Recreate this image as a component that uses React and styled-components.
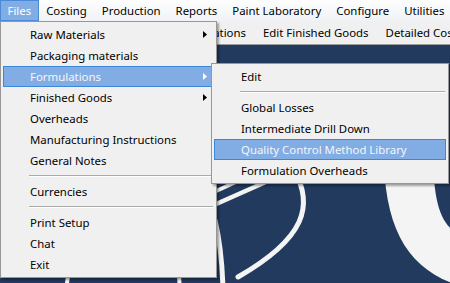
import React from "react";
import styled, { createGlobalStyle } from "styled-components";

const GlobalStyle = createGlobalStyle`
  html, body {
    margin: 0;
    padding: 0;
  }
  body {
    width: 450px;
    height: 283px;
    overflow: hidden;
    font-family: "Noto Sans", "Segoe UI", sans-serif;
    font-size: 11.4px;
  }
`;

const Window = styled.div`
  position: relative;
  width: 450px;
  height: 283px;
  display: flex;
  flex-direction: column;
  background: #213a5e;
  overflow: hidden;
`;

const MenuBar = styled.div`
  display: flex;
  height: 21px;
  background: linear-gradient(#fefefe, #f0f2f5);
  white-space: nowrap;
`;

const MenuBarItem = styled.div`
  display: flex;
  align-items: center;
  box-sizing: border-box;
  padding: 0 6.5px 1px;
  border: 1px solid ${(p) => (p.$open ? "#4a8ad6" : "transparent")};
  background: ${(p) => (p.$open ? "#82ade4" : "transparent")};
  color: ${(p) => (p.$open ? "#ffffff" : "#000000")};
`;

const Toolbar = styled.div`
  display: flex;
  align-items: center;
  gap: 17px;
  height: 23px;
  padding-left: 175px;
  background: #f0f0f0;
  border-bottom: 1px solid #9c9c9c;
  white-space: nowrap;
  overflow: hidden;
`;

const ToolButton = styled.div`
  color: #000;
`;

const Desktop = styled.div`
  flex: 1;
  position: relative;
  background: #213a5e;
`;

const Logo = styled.svg`
  display: block;
  width: 100%;
  height: 100%;
`;

const Dropdown = styled.div`
  position: absolute;
  left: ${(p) => p.$left}px;
  top: ${(p) => p.$top}px;
  width: ${(p) => p.$width}px;
  box-sizing: border-box;
  padding: 2px;
  background: #f0f0f0;
  border: 1px solid #979797;
  box-shadow: 2px 2px 2px rgba(0, 0, 0, 0.35);
  z-index: ${(p) => p.$layer || 1};
`;

const Item = styled.div`
  position: relative;
  display: flex;
  align-items: center;
  box-sizing: border-box;
  height: 21px;
  padding: 0 0 1px 26px;
  border: 1px solid ${(p) => (p.$active ? "#3d87d8" : "transparent")};
  background: ${(p) => (p.$active ? "#82ade4" : "transparent")};
  color: ${(p) => (p.$active ? "#f6f6f6" : "#000000")};
  white-space: nowrap;
`;

const Arrow = styled.svg`
  position: absolute;
  right: 6px;
  top: 6px;
  width: 4px;
  height: 7px;
`;

const Separator = styled.div`
  height: 10px;
  display: flex;
  align-items: flex-start;
  padding: 4px 1px 0 26px;
  box-sizing: border-box;

  &::after {
    content: "";
    flex: 1;
    border-top: 1px solid #ababab;
    border-bottom: 1px solid #ffffff;
  }
`;

const SubmenuSlot = styled.div`
  position: absolute;
  left: 0;
  top: 0;
`;

const fileItems = [
  { label: "Raw Materials", more: true },
  { label: "Packaging materials" },
  { label: "Formulations", more: true, open: true },
  { label: "Finished Goods", more: true },
  { label: "Overheads" },
  { label: "Manufacturing Instructions" },
  { label: "General Notes" },
  "sep",
  { label: "Currencies" },
  "sep",
  { label: "Print Setup" },
  { label: "Chat" },
  { label: "Exit" },
];

const formulationItems = [
  { label: "Edit" },
  "sep",
  { label: "Global Losses" },
  { label: "Intermediate Drill Down" },
  { label: "Quality Control Method Library", active: true },
  { label: "Formulation Overheads" },
];

const SubArrow = ({ light }) => (
  <Arrow viewBox="0 0 4 7">
    <polygon points="0,0 4,3.5 0,7" fill={light ? "#ffffff" : "#000000"} />
  </Arrow>
);

const MenuList = ({ items }) =>
  items.map((it, i) =>
    it === "sep" ? (
      <Separator key={i} />
    ) : (
      <Item key={i} $active={it.active || it.open}>
        {it.label}
        {it.more && <SubArrow light={it.open} />}
      </Item>
    )
  );

const App = () => {
  return (
    <>
      <GlobalStyle />
      <Window>
        <MenuBar>
          <MenuBarItem $open>Files</MenuBarItem>
          <MenuBarItem>Costing</MenuBarItem>
          <MenuBarItem>Production</MenuBarItem>
          <MenuBarItem>Reports</MenuBarItem>
          <MenuBarItem>Paint Laboratory</MenuBarItem>
          <MenuBarItem>Configure</MenuBarItem>
          <MenuBarItem>Utilities</MenuBarItem>
          <MenuBarItem>W</MenuBarItem>
        </MenuBar>
        <Toolbar>
          <ToolButton>Formulations</ToolButton>
          <ToolButton>Edit Finished Goods</ToolButton>
          <ToolButton>Detailed Cos</ToolButton>
        </Toolbar>
        <Desktop>
          <Logo viewBox="0 45 450 238" preserveAspectRatio="none">
            <g fill="none" stroke="#f4f4f4" strokeLinecap="round">
              <path d="M 214 205 L 268 181" strokeWidth="4.5" />
              <path d="M 214 192 L 262 170" strokeWidth="4" />
              <path d="M 294 170 C 314 205, 306 238, 238 277" strokeWidth="5" />
              <path d="M 215 220 Q 222 250 223 290" strokeWidth="5" />
              <path d="M 66 290 L 68 276" strokeWidth="4" />
              <path d="M 180 290 L 179 276" strokeWidth="4" />
            </g>
            <path
              d="M 384 130 C 380 225, 405 268, 460 286 L 460 236 C 438 222, 432 200, 433 130 Z"
              fill="#f4f4f4"
            />
          </Logo>
        </Desktop>

        <Dropdown $left={0} $top={21} $width={217} $layer={2}>
          <MenuList items={fileItems.slice(0, 2)} />
          <Item $active>
            Formulations
            <SubArrow light />
            <SubmenuSlot>
              <Dropdown $left={207} $top={-4} $width={238} $layer={3}>
                <MenuList items={formulationItems} />
              </Dropdown>
            </SubmenuSlot>
          </Item>
          <MenuList items={fileItems.slice(3)} />
        </Dropdown>
      </Window>
    </>
  );
};

export default App;
